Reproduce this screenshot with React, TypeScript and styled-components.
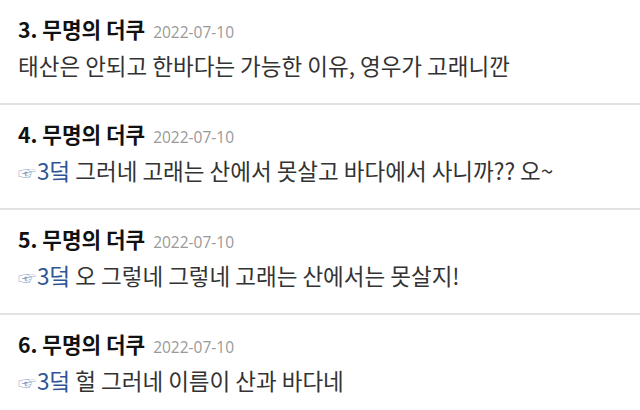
import React from "react";
import styled, { createGlobalStyle } from "styled-components";

const Global = createGlobalStyle`
  html, body { margin: 0; padding: 0; background: #fff; }
  body { font-family: "Noto Sans CJK KR", "Noto Sans", sans-serif; }
`;

const List = styled.div`
  display: flex;
  flex-direction: column;
`;

const Item = styled.div`
  padding: 11px 18px 20px;
  border-bottom: 2px solid #e2e2e2;
`;

const Header = styled.div`
  display: flex;
  align-items: baseline;
  gap: 8px;
  height: 36px;
  line-height: 36px;
`;

const Name = styled.span`
  font-size: 21.3px;
  font-weight: 700;
  color: #111;
`;

const DateText = styled.span`
  font-size: 15.5px;
  color: #999;
  font-family: "Open Sans", "Noto Sans", sans-serif;
`;

const Body = styled.div`
  font-size: 22.5px;
  line-height: 36px;
  height: 36px;
  color: #333;
  white-space: nowrap;
`;

const Ref = styled.span`
  color: #2f5597;
`;

const Hand = styled.span`
  color: #8ea3c8;
  font-size: 18px;
  margin-right: 1px;
`;

const comments = [
  { n: 3, ref: false, text: "태산은 안되고 한바다는 가능한 이유, 영우가 고래니깐" },
  { n: 4, ref: true, text: "그러네 고래는 산에서 못살고 바다에서 사니까?? 오~" },
  { n: 5, ref: true, text: "오 그렇네 그렇네 고래는 산에서는 못살지!" },
  { n: 6, ref: true, text: "헐 그러네 이름이 산과 바다네" },
];

export default function App() {
  return (
    <>
      <Global />
      <List>
        {comments.map((c) => (
          <Item key={c.n}>
            <Header>
              <Name>{c.n}. 무명의 더쿠</Name>
              <DateText>2022-07-10</DateText>
            </Header>
            <Body>
              {c.ref && (
                <Ref>
                  <Hand>☞</Hand>3덬
                </Ref>
              )}
              {c.ref ? " " : ""}
              {c.text}
            </Body>
          </Item>
        ))}
      </List>
    </>
  );
}
